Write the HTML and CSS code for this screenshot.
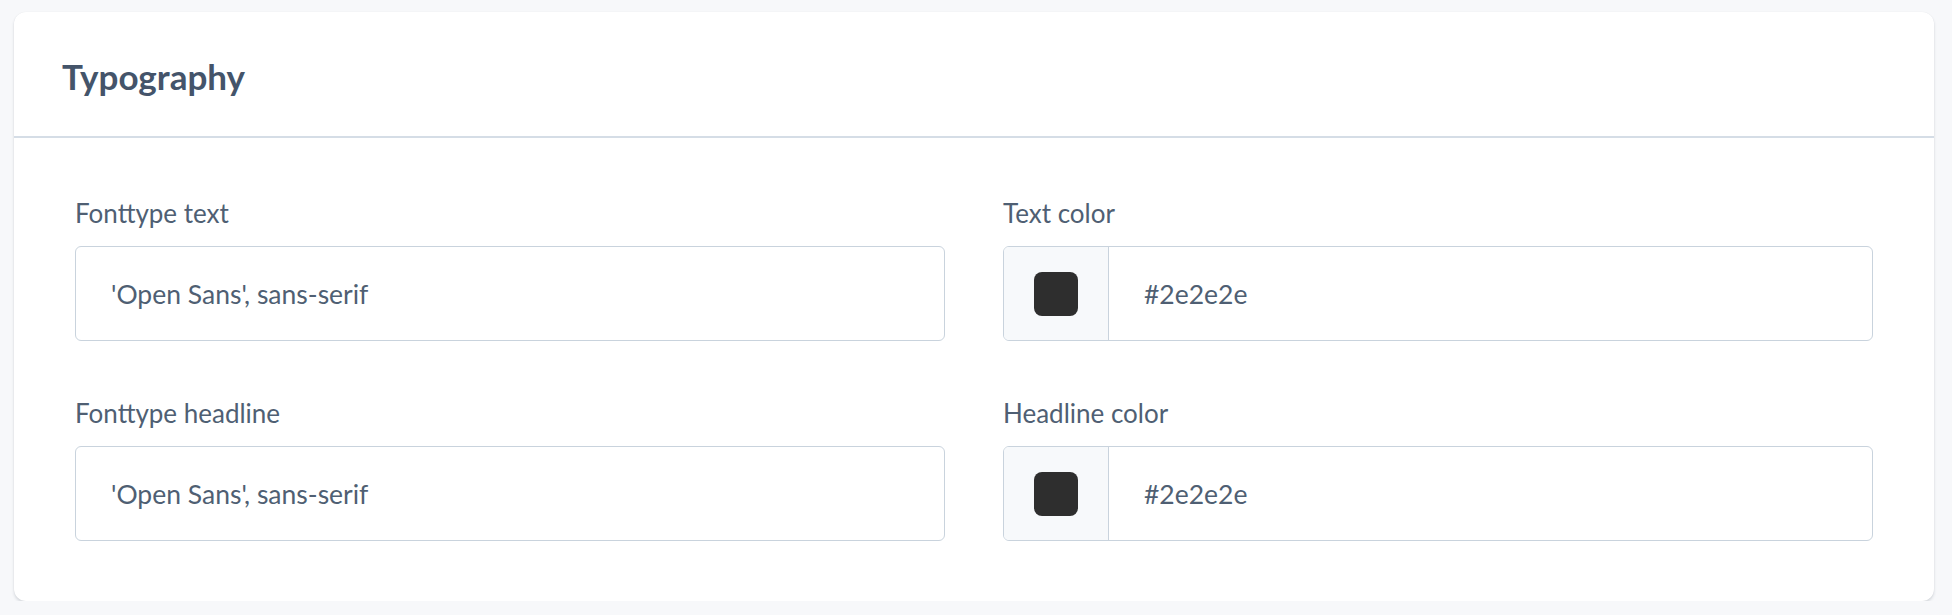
FILE: index.html
```html
<!DOCTYPE html>
<html lang="en">
<head>
<meta charset="utf-8">
<title>Typography</title>
<link rel="stylesheet" href="styles.css">
</head>
<body>
<div class="card">
  <div class="card-header">
    <h2 class="card-title">Typography</h2>
  </div>
  <div class="card-body">
    <div class="field">
      <label class="field-label">Fonttype text</label>
      <div class="input">
        <span class="input-value">'Open Sans', sans-serif</span>
      </div>
    </div>
    <div class="field">
      <label class="field-label">Text color</label>
      <div class="input input-color">
        <span class="addon"><span class="swatch"></span></span>
        <span class="input-value">#2e2e2e</span>
      </div>
    </div>
    <div class="field">
      <label class="field-label">Fonttype headline</label>
      <div class="input">
        <span class="input-value">'Open Sans', sans-serif</span>
      </div>
    </div>
    <div class="field">
      <label class="field-label">Headline color</label>
      <div class="input input-color">
        <span class="addon"><span class="swatch"></span></span>
        <span class="input-value">#2e2e2e</span>
      </div>
    </div>
  </div>
</div>
</body>
</html>
```

FILE: styles.css
```css
* { box-sizing: border-box; }

html, body {
  margin: 0;
  padding: 0;
  background: #f7f8fa;
}

body {
  padding: 12px 18px 0 14px;
  font-family: Lato, "Liberation Sans", sans-serif;
  color: #4f5f73;
}

.card {
  width: 1920px;
  background: #ffffff;
  border-radius: 12px;
  box-shadow: 0 2px 3px rgba(40, 50, 70, 0.16), 0 0 1px rgba(40, 50, 70, 0.08);
}

.card-header {
  padding: 43px 48px 39px;
  border-bottom: 2px solid #d5dde6;
}

.card-title {
  margin: 0;
  font-size: 35px;
  line-height: 42px;
  font-weight: 700;
  color: #44546a;
}

.card-body {
  display: grid;
  grid-template-columns: 1fr 1fr;
  column-gap: 58px;
  row-gap: 54px;
  padding: 57px 61px 60px;
}

.field {
  display: flex;
  flex-direction: column;
}

.field-label {
  display: block;
  font-size: 26px;
  line-height: 36px;
  margin-bottom: 15px;
  color: #4f5f73;
}

.input {
  display: flex;
  align-items: center;
  height: 95px;
  border: 1px solid #c9d3dd;
  border-radius: 6px;
  background: #fff;
  overflow: hidden;
}

.input-value {
  padding-left: 35px;
  font-size: 26.5px;
  color: #4f5f73;
}

.addon {
  display: flex;
  align-items: center;
  justify-content: center;
  width: 105px;
  height: 100%;
  background: #f7f9fb;
  border-right: 1px solid #c9d3dd;
}

.swatch {
  width: 44px;
  height: 44px;
  border-radius: 8px;
  background: #2e2e2e;
}
```
